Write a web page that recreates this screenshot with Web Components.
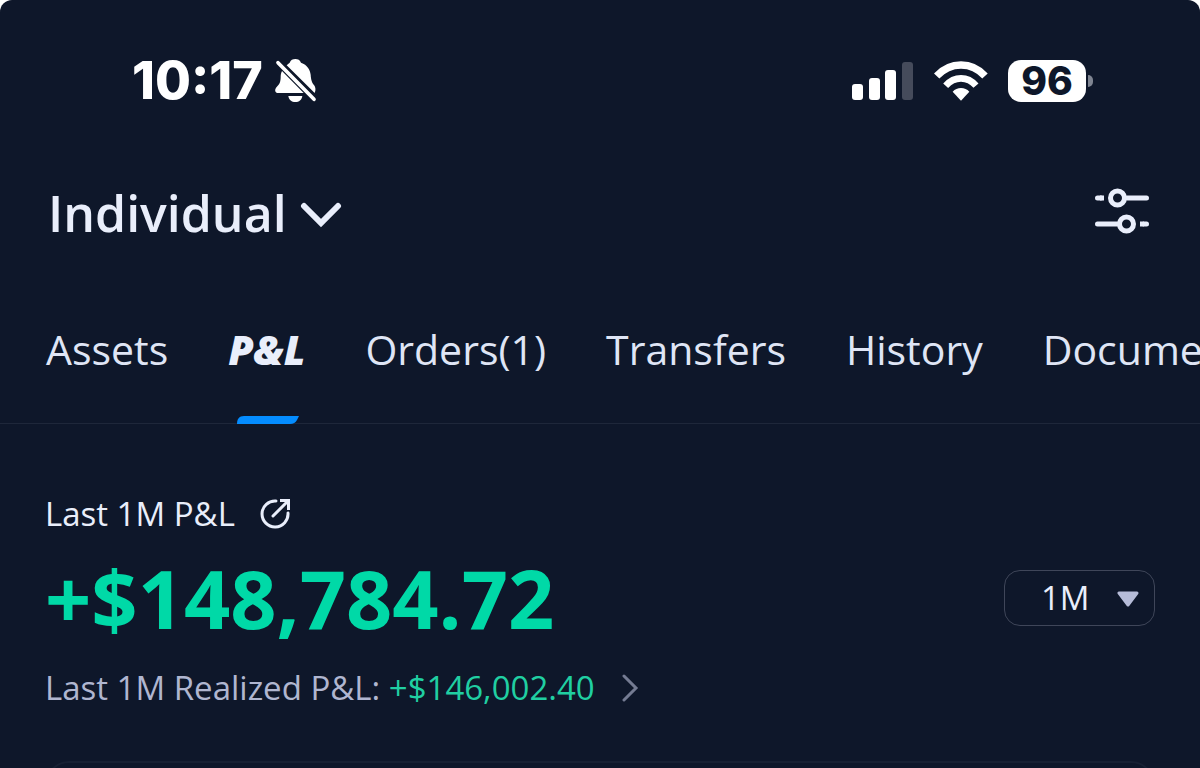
<!DOCTYPE html>
<html lang="en">
<head>
<meta charset="utf-8">
<meta name="viewport" content="width=device-width, initial-scale=1">
<title>Account P&amp;L</title>
<style>
  html { background: #fff; }
  body { margin: 0; font-family: "Open Sans", "Noto Sans", sans-serif; color: #e9eefb; }
</style>
</head>
<body>
<account-app></account-app>

<script>
const define = (name, html, setup) => customElements.define(name, class extends HTMLElement {
  constructor() {
    super();
    const t = document.createElement('template');
    t.innerHTML = html;
    this.attachShadow({ mode: 'open' }).append(t.content.cloneNode(true));
  }
  connectedCallback() { if (setup) setup(this, this.shadowRoot); }
});

define('status-bar', `
<style>
  :host { display: flex; justify-content: space-between; align-items: center; height: 64px; padding: 49px 107px 0 132px; color: #fff; font-family: Inter, sans-serif; }
  .left, .right { display: flex; align-items: center; }
  .left { gap: 12px; }
  .right { gap: 20px; }
  time { font-size: 52px; line-height: 64px; font-weight: 800; }
  svg { display: block; flex: none; }
  .battery { display: flex; align-items: center; gap: 2px; }
  .level { box-sizing: border-box; width: 78px; height: 42px; line-height: 42px; border-radius: 13px; background: #fff; color: #0e172a; text-align: center; font-size: 39px; font-weight: 800; }
  .tip { width: 5px; height: 12px; border-radius: 0 6px 6px 0; background: #7f8592; }
</style>
<div class="left">
  <time>10:17</time>
  <svg width="42" height="46" viewBox="464 42 126 138" fill="#fff" role="img" aria-label="Silent mode">
    <path d="M499 64C503 60 506 58 508 56C511 48 517 45 525 45C533 45 539 48 542 56C561 63 569 76 571 92C572 108 575 116 581 123C586 129 587 138 583 147Z"/>
    <path d="M485 81L550 147H474C463 147 462 137 469 129C479 119 480 114 481 102C481 92 482 88 485 81Z"/>
    <path d="M504 156H546C544 168 536 174 525 174C514 174 506 168 504 156Z"/>
    <path d="M473 56L581 166" stroke="#fff" stroke-width="11" stroke-linecap="round"/>
  </svg>
</div>
<div class="right">
  <svg width="62" height="40" viewBox="0 0 62 40" fill="#fff" role="img" aria-label="Signal">
    <rect x="0" y="23" width="11" height="16" rx="3"/><rect x="17" y="17" width="11" height="22" rx="3"/>
    <rect x="33" y="9" width="11" height="30" rx="3"/><rect x="50" y="1" width="11" height="38" rx="3" fill="#454b5b"/>
  </svg>
  <svg width="54" height="40" viewBox="281 45 162 120" fill="none" stroke="#fff" role="img" aria-label="Wi-Fi">
    <path d="M289 90Q320 57 362 57T434 90" stroke-width="22"/>
    <path d="M316 119Q336 97 362 97T407 119" stroke-width="20"/>
    <path d="M362 164L337 137Q347 126 362 126T387 137Z" fill="#fff" stroke="none"/>
  </svg>
  <div class="battery"><span class="level">96</span><span class="tip"></span></div>
</div>`);

define('account-header', `
<style>
  :host { display: flex; justify-content: space-between; align-items: center; padding: 64px 50px 0 48px; }
  button { display: flex; align-items: center; gap: 13px; padding: 0; border: 0; background: none; color: inherit; font: 600 50px/72px "Open Sans", sans-serif; cursor: pointer; }
  svg { display: block; }
</style>
<button class="account" type="button"><slot></slot>
  <svg width="42" height="30" viewBox="0 0 42 30" fill="none" stroke="#e9eefb" stroke-width="6" stroke-linecap="round" aria-hidden="true"><path d="M4 8L21 25L38 8"/></svg>
</button>
<button type="button" aria-label="Settings">
  <svg width="56" height="50" viewBox="0 2 56 50" fill="none" stroke="#e9eefb" stroke-width="5" aria-hidden="true">
    <path d="M3.5 12H7M33 12H52.5M3.5 38H24M50 38H52.5" stroke-linecap="round"/><path d="M6 12H10M46 38H50"/><circle cx="23.5" cy="12" r="7"/><circle cx="32.5" cy="38" r="7"/>
  </svg>
</button>`);

define('tab-bar', `
<style>
  :host { display: block; overflow: hidden; margin-top: 65px; box-shadow: inset 0 -1px #1e273a; }
  nav { display: flex; gap: 60px; padding-left: 46px; }
</style>
<nav><slot></slot></nav>`);

define('tab-link', `
<style>
  :host { display: block; flex: none; position: relative; }
  a { display: block; height: 110px; font-size: 41px; line-height: 70px; color: #dfe5f5; text-decoration: none; white-space: nowrap; }
  :host([selected]) a { color: #e9eefb; font-weight: 800; font-style: italic; }
  svg { display: none; position: absolute; left: 50%; bottom: 0; margin-left: -30px; }
  :host([selected]) svg { display: block; }
</style>
<a href="#"><slot></slot></a>
<svg width="62" height="8" viewBox="0 0 62 8" aria-hidden="true"><path d="M0 8C0 3 2 0 7 0H62L60 4Q58 8 53 8Z" fill="#048cff"/></svg>`,
(el, root) => { if (el.hasAttribute('selected')) root.querySelector('a').setAttribute('aria-current', 'page'); });

define('period-select', `
<style>
  :host { display: flex; align-items: center; position: relative; }
  select { appearance: none; width: 151px; height: 56px; padding: 0 60px 0 36px; border: 1px solid #3f4659; border-radius: 16px; background: #0e172a; color: #e9eefb; font: 33px/48px "Open Sans", sans-serif; }
  svg { position: absolute; right: 16px; pointer-events: none; }
</style>
<select aria-label="Period"><option>1M</option><option>3M</option><option>1Y</option></select>
<svg width="22" height="20" viewBox="0 0 22 20" aria-hidden="true"><path d="M2 5H20L11 17Z" fill="#b6bcd8" stroke="#b6bcd8" stroke-width="3" stroke-linejoin="round"/></svg>`);

define('pnl-summary', `
<style>
  :host { display: block; padding: 66px 45px 0; }
  .title, .row, .realized { display: flex; align-items: center; }
  .title { gap: 24px; font-size: 33px; line-height: 48px; }
  .row { justify-content: space-between; }
  .total { font-size: 81px; line-height: 120px; font-weight: 700; color: #00d9a7; }
  .realized { gap: 26px; font-size: 33px; line-height: 60px; color: #b0b6d0; text-decoration: none; }
  .gain { color: #20cfa2; }
  svg { display: block; }
</style>
<div class="title"><slot name="title"></slot>
  <svg width="32" height="32" viewBox="0 0 32 32" fill="none" stroke="#e9eefb" stroke-width="3" aria-hidden="true">
    <path d="M17 3A13 13 0 1 0 29 15" stroke-linecap="round"/><path d="M14 18L28 4" stroke-linecap="round"/><path d="M21 2.5H29.500V12"/>
  </svg>
</div>
<div class="row"><div class="total"><slot name="total"></slot></div><period-select></period-select></div>
<a class="realized" href="#"><span><slot name="label"></slot> <span class="gain"><slot name="realized"></slot></span></span>
  <svg width="18" height="28" viewBox="0 0 18 28" fill="none" stroke="#747b92" stroke-width="3" stroke-linecap="round" aria-hidden="true"><path d="M3 2L15 14L3 26"/></svg>
</a>`);

define('chart-card', `
<style>
  :host { display: block; margin: 43px 45px 0; height: 400px; border: 2px solid #172033; border-radius: 24px; }
</style>`);

define('account-app', `
<style>
  :host { display: block; height: 100vh; overflow: hidden; background: #0e172a; border-radius: 12px 12px 0 0; }
</style>
<status-bar></status-bar>
<account-header>Individual</account-header>
<tab-bar>
  <tab-link>Assets</tab-link><tab-link selected>P&amp;L</tab-link><tab-link>Orders(1)</tab-link><tab-link>Transfers</tab-link><tab-link>History</tab-link><tab-link>Documents</tab-link>
</tab-bar>
<pnl-summary>
  <span slot="title">Last 1M P&amp;L</span>
  <span slot="total">+$148,784.72</span>
  <span slot="label">Last 1M Realized P&amp;L:</span>
  <span slot="realized">+$146,002.40</span>
</pnl-summary>
<chart-card></chart-card>`);
</script>
</body>
</html>
